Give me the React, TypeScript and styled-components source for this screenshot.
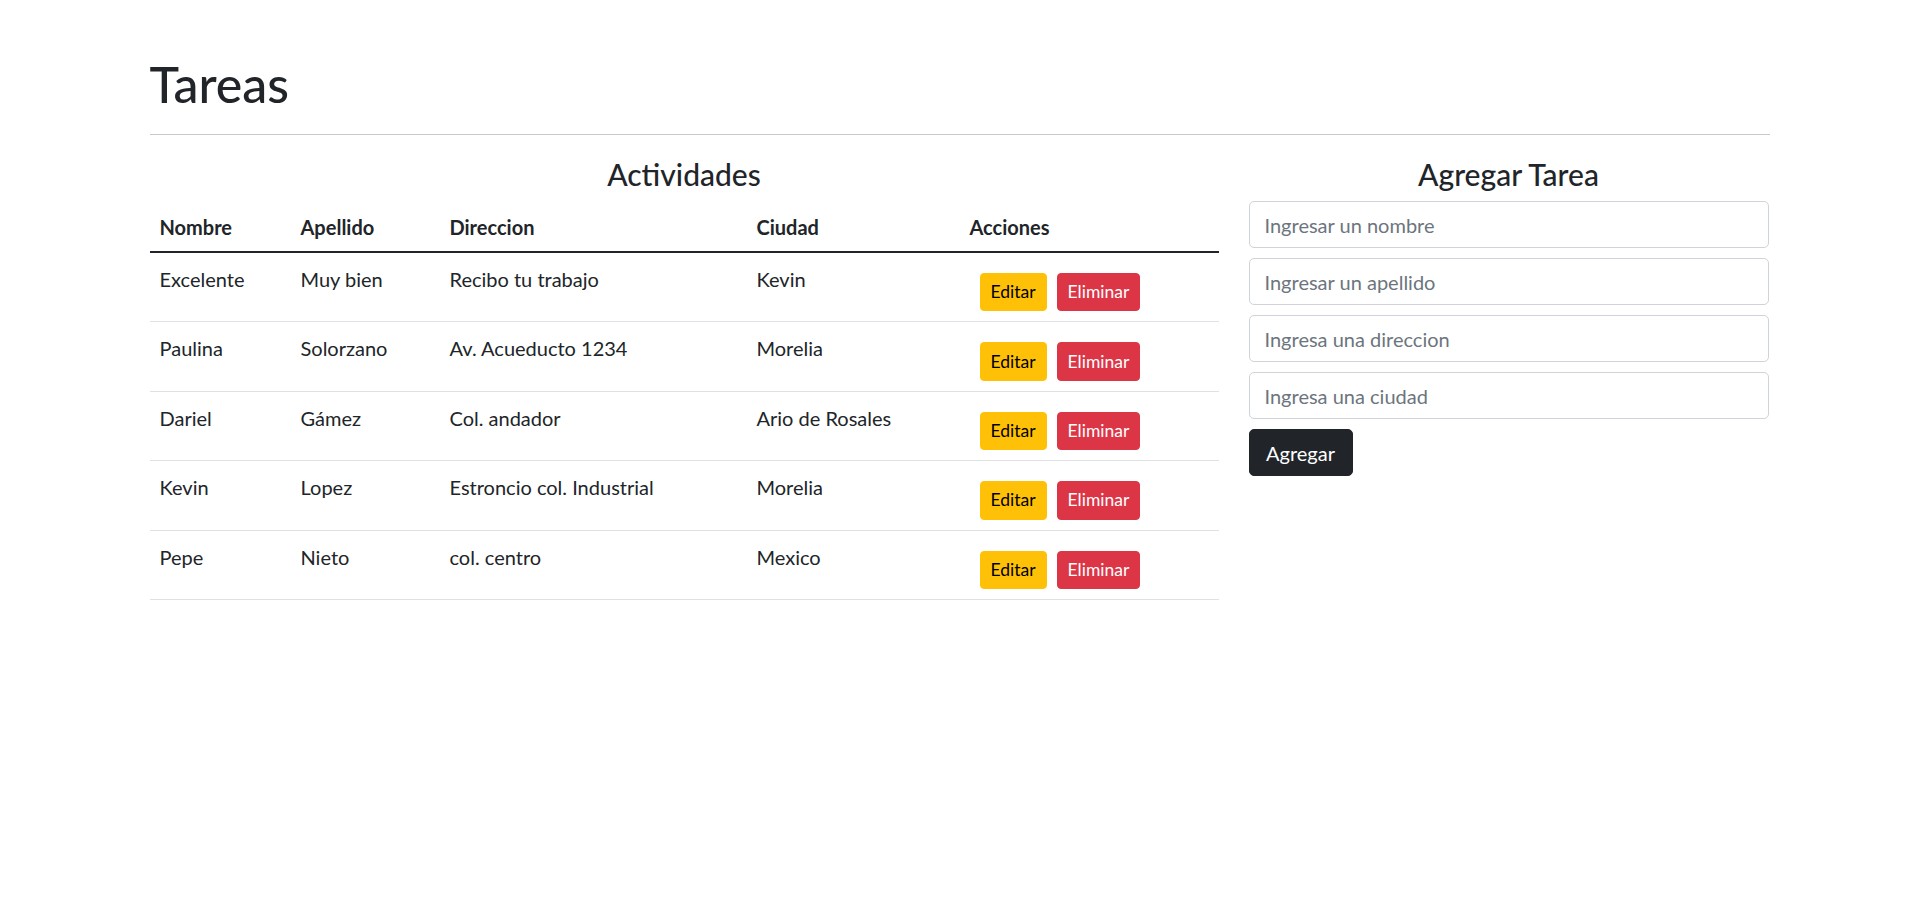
import React from "react";
import styled, { createGlobalStyle } from "styled-components";

const GlobalStyle = createGlobalStyle`
  html, body {
    margin: 0;
    padding: 0;
    background: #ffffff;
  }
  body {
    font-family: Lato, "Segoe UI", "Liberation Sans", sans-serif;
    font-size: 20px;
    line-height: 1.5;
    color: #212529;
  }
  *, *::before, *::after { box-sizing: border-box; }
`;

const Container = styled.div`
  width: 1651px;
  margin: 0 auto;
  padding: 54px 14.5px 0 16px;
`;

const Title = styled.h1`
  margin: 0 0 9px;
  font-size: 50px;
  font-weight: 500;
  line-height: 1.2;
`;

const Divider = styled.hr`
  margin: 20px 0;
  border: 0;
  border-top: 1px solid #c8c9ca;
  height: 0;
`;

const Row = styled.div`
  display: grid;
  grid-template-columns: 1069px 520px;
  column-gap: 30px;
  align-items: start;
`;

const Column = styled.section`
  display: flex;
  flex-direction: column;
`;

const SectionTitle = styled.h4`
  margin: 0 0 10px;
  padding-top: 1px;
  height: 36px;
  font-size: 30px;
  font-weight: 500;
  line-height: 36px;
  text-align: center;
`;

const Table = styled.table`
  width: 100%;
  table-layout: fixed;
  border-collapse: separate;
  border-spacing: 0;
`;

const HeadCell = styled.th<{ $width: number }>`
  width: ${(p) => p.$width}px;
  padding: 11px 10px 9px;
  text-align: left;
  font-weight: 700;
  line-height: 30px;
  border-bottom: 2px solid #212529;
`;

const Cell = styled.td`
  padding: 11px 10px 9px;
  line-height: 30px;
  vertical-align: top;
  border-bottom: 1px solid #dee2e6;
`;

const ActionsCell = styled(Cell)`
  padding: 20px 10px 10px;
`;

const ActionGroup = styled.div`
  display: flex;
  gap: 10px;
  padding-left: 10px;
`;

const SmallButton = styled.button<{ $variant: "warning" | "danger" }>`
  height: 38.4px;
  padding: 0 10px;
  font-family: inherit;
  font-size: 17.5px;
  line-height: 26px;
  border-radius: 4px;
  border: 1px solid ${(p) => (p.$variant === "warning" ? "#ffc107" : "#dc3545")};
  background: ${(p) => (p.$variant === "warning" ? "#ffc107" : "#dc3545")};
  color: ${(p) => (p.$variant === "warning" ? "#000000" : "#ffffff")};
  cursor: pointer;
`;

const Form = styled.form`
  display: flex;
  flex-direction: column;
  align-items: flex-start;
  gap: 10px;
`;

const Input = styled.input`
  width: 100%;
  height: 47px;
  padding: 8px 15px 7px;
  font-family: inherit;
  font-size: 20px;
  line-height: 30px;
  color: #212529;
  background: #ffffff;
  border: 1px solid #ced4da;
  border-radius: 5px;
  outline: none;
  &::placeholder {
    color: #6c757d;
    opacity: 1;
  }
`;

const SubmitButton = styled.button`
  height: 47px;
  padding: 1px 16.5px 0;
  font-family: inherit;
  font-size: 20px;
  line-height: 30px;
  color: #ffffff;
  background: #212529;
  border: 1px solid #212529;
  border-radius: 5px;
  cursor: pointer;
`;

type Task = { nombre: string; apellido: string; direccion: string; ciudad: string };

const tasks: Task[] = [
  { nombre: "Excelente", apellido: "Muy bien", direccion: "Recibo tu trabajo", ciudad: "Kevin" },
  { nombre: "Paulina", apellido: "Solorzano", direccion: "Av. Acueducto 1234", ciudad: "Morelia" },
  { nombre: "Dariel", apellido: "Gámez", direccion: "Col. andador", ciudad: "Ario de Rosales" },
  { nombre: "Kevin", apellido: "Lopez", direccion: "Estroncio col. Industrial", ciudad: "Morelia" },
  { nombre: "Pepe", apellido: "Nieto", direccion: "col. centro", ciudad: "Mexico" },
];

const columns: { label: string; width: number }[] = [
  { label: "Nombre", width: 141 },
  { label: "Apellido", width: 149 },
  { label: "Direccion", width: 307 },
  { label: "Ciudad", width: 213 },
  { label: "Acciones", width: 259 },
];

export default function App() {
  return (
    <>
      <GlobalStyle />
      <Container>
        <Title>Tareas</Title>
        <Divider />
        <Row>
          <Column>
            <SectionTitle>Actividades</SectionTitle>
            <Table>
              <thead>
                <tr>
                  {columns.map((c) => (
                    <HeadCell key={c.label} $width={c.width}>
                      {c.label}
                    </HeadCell>
                  ))}
                </tr>
              </thead>
              <tbody>
                {tasks.map((t, i) => (
                  <tr key={i}>
                    <Cell>{t.nombre}</Cell>
                    <Cell>{t.apellido}</Cell>
                    <Cell>{t.direccion}</Cell>
                    <Cell>{t.ciudad}</Cell>
                    <ActionsCell>
                      <ActionGroup>
                        <SmallButton type="button" $variant="warning">Editar</SmallButton>
                        <SmallButton type="button" $variant="danger">Eliminar</SmallButton>
                      </ActionGroup>
                    </ActionsCell>
                  </tr>
                ))}
              </tbody>
            </Table>
          </Column>
          <Column>
            <SectionTitle>Agregar Tarea</SectionTitle>
            <Form onSubmit={(e) => e.preventDefault()}>
              <Input placeholder="Ingresar un nombre" />
              <Input placeholder="Ingresar un apellido" />
              <Input placeholder="Ingresa una direccion" />
              <Input placeholder="Ingresa una ciudad" />
              <SubmitButton type="submit">Agregar</SubmitButton>
            </Form>
          </Column>
        </Row>
      </Container>
    </>
  );
}
